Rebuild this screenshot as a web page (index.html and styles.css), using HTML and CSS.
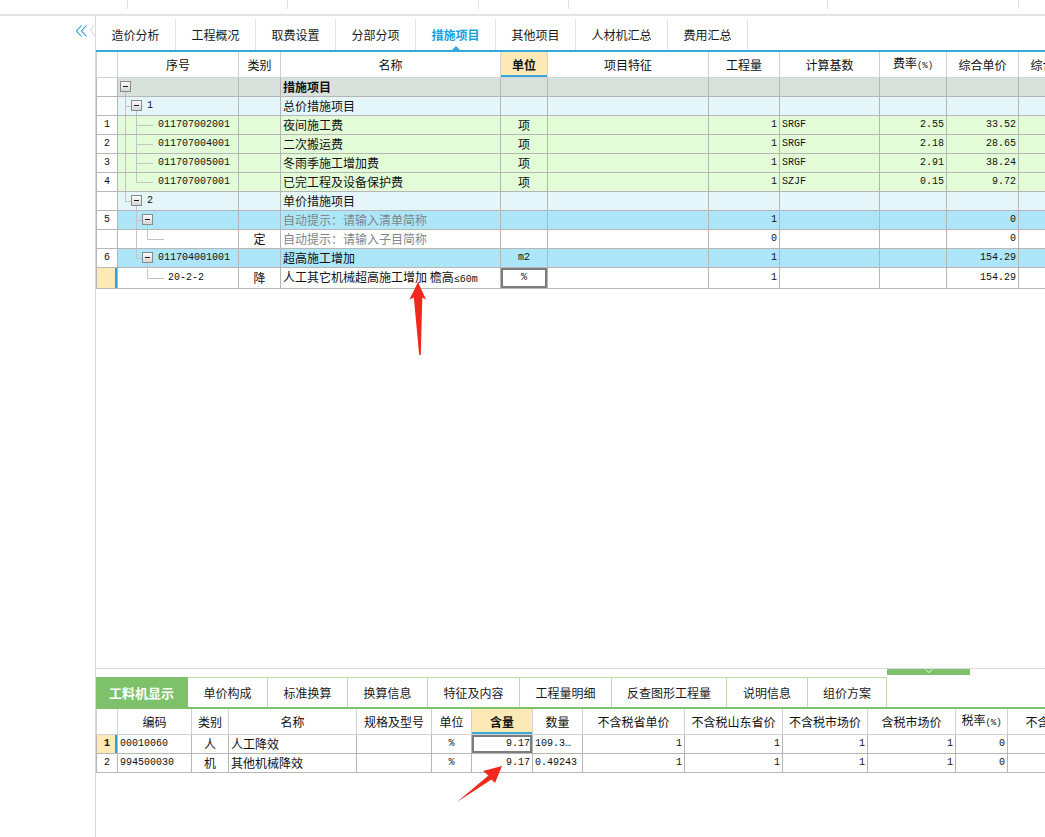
FILE: index.html
```html
<!DOCTYPE html>
<html lang="zh-CN">
<head>
<meta charset="utf-8">
<title>措施项目</title>
<link rel="stylesheet" href="styles.css">
</head>
<body>
<div class="topbar">
  <span class="seg s1"></span><span class="seg s2"></span><span class="seg s3"></span><span class="seg s4"></span><span class="seg s5"></span><span class="seg s6"></span>
</div>
<div class="main">
  <aside class="side">
    <svg class="collapse" width="20" height="14" viewBox="0 0 20 14">
      <polyline points="5.5,0.5 0.5,6 5.5,11.5" fill="none" stroke="#1e9ad6" stroke-width="1.1"/>
      <polyline points="10.5,0.5 5.5,6 10.5,11.5" fill="none" stroke="#1e9ad6" stroke-width="1.1"/>
      <polyline points="19.5,-2 14.5,5 19.5,12" fill="none" stroke="#d4d4d4" stroke-width="1"/>
    </svg>
  </aside>
  <section class="panel">
    <nav class="tabs">
      <div class="tab">造价分析</div>
      <div class="tab">工程概况</div>
      <div class="tab">取费设置</div>
      <div class="tab">分部分项</div>
      <div class="tab active">措施项目</div>
      <div class="tab">其他项目</div>
      <div class="tab wide">人材机汇总</div>
      <div class="tab">费用汇总</div>
    </nav>
    <div class="grid-area">
      <table class="grid top">
        <colgroup>
          <col class="c21"><col class="c121"><col class="c42"><col class="c220"><col class="c47"><col class="c161"><col class="c71"><col class="c100"><col class="c67"><col class="c72"><col class="c72">
        </colgroup>
        <thead>
          <tr>
            <th class="rn"></th><th>序号</th><th>类别</th><th>名称</th><th class="hl">单位</th><th>项目特征</th><th>工程量</th><th>计算基数</th><th>费率<span class="pct">(%)</span></th><th>综合单价</th><th>综合合价</th>
          </tr>
        </thead>
        <tbody>
          <tr class="r-root">
            <td class="rn"></td>
            <td class="tree"><div class="tv"><span class="g b"><i class="bx"></i></span></div></td>
            <td></td><td class="b">措施项目</td><td></td><td></td><td></td><td></td><td></td><td></td><td></td>
          </tr>
          <tr class="r-grp">
            <td class="rn"></td>
            <td class="tree"><div class="tv"><span class="g t"></span><span class="g b"><i class="bx"></i></span><span class="m lbl">1</span></div></td>
            <td></td><td>总价措施项目</td><td></td><td></td><td></td><td></td><td></td><td></td><td></td>
          </tr>
          <tr class="r-leaf">
            <td class="rn m">1</td>
            <td class="tree"><div class="tv"><span class="g v"></span><span class="g t"></span><span class="g h"></span><span class="m lbl">011707002001</span></div></td>
            <td></td><td>夜间施工费</td><td class="c">项</td><td></td><td class="m r">1</td><td class="m">SRGF</td><td class="m r">2.55</td><td class="m r">33.52</td><td></td>
          </tr>
          <tr class="r-leaf">
            <td class="rn m">2</td>
            <td class="tree"><div class="tv"><span class="g v"></span><span class="g t"></span><span class="g h"></span><span class="m lbl">011707004001</span></div></td>
            <td></td><td>二次搬运费</td><td class="c">项</td><td></td><td class="m r">1</td><td class="m">SRGF</td><td class="m r">2.18</td><td class="m r">28.65</td><td></td>
          </tr>
          <tr class="r-leaf">
            <td class="rn m">3</td>
            <td class="tree"><div class="tv"><span class="g v"></span><span class="g t"></span><span class="g h"></span><span class="m lbl">011707005001</span></div></td>
            <td></td><td>冬雨季施工增加费</td><td class="c">项</td><td></td><td class="m r">1</td><td class="m">SRGF</td><td class="m r">2.91</td><td class="m r">38.24</td><td></td>
          </tr>
          <tr class="r-leaf">
            <td class="rn m">4</td>
            <td class="tree"><div class="tv"><span class="g v"></span><span class="g e"></span><span class="g h"></span><span class="m lbl">011707007001</span></div></td>
            <td></td><td>已完工程及设备保护费</td><td class="c">项</td><td></td><td class="m r">1</td><td class="m">SZJF</td><td class="m r">0.15</td><td class="m r">9.72</td><td></td>
          </tr>
          <tr class="r-grp">
            <td class="rn"></td>
            <td class="tree"><div class="tv"><span class="g e"></span><span class="g b"><i class="bx"></i></span><span class="m lbl">2</span></div></td>
            <td></td><td>单价措施项目</td><td></td><td></td><td></td><td></td><td></td><td></td><td></td>
          </tr>
          <tr class="r-sel">
            <td class="rn m">5</td>
            <td class="tree"><div class="tv"><span class="g"></span><span class="g t"></span><span class="g b"><i class="bx"></i></span></div></td>
            <td></td><td class="hint">自动提示：请输入清单简称</td><td></td><td></td><td class="m r">1</td><td></td><td></td><td class="m r">0</td><td></td>
          </tr>
          <tr class="r-white">
            <td class="rn"></td>
            <td class="tree"><div class="tv"><span class="g"></span><span class="g v"></span><span class="g e"></span><span class="g h"></span></div></td>
            <td class="c">定</td><td class="hint">自动提示：请输入子目简称</td><td></td><td></td><td class="m r">0</td><td></td><td></td><td class="m r">0</td><td></td>
          </tr>
          <tr class="r-sel">
            <td class="rn m">6</td>
            <td class="tree"><div class="tv"><span class="g"></span><span class="g e"></span><span class="g b"><i class="bx"></i></span><span class="m lbl">011704001001</span></div></td>
            <td></td><td>超高施工增加</td><td class="m c">m2</td><td></td><td class="m r">1</td><td></td><td></td><td class="m r">154.29</td><td></td>
          </tr>
          <tr class="r-white cur">
            <td class="rn"></td>
            <td class="tree"><div class="tv"><span class="g"></span><span class="g"></span><span class="g e"></span><span class="g h"></span><span class="m lbl2">20-2-2</span></div></td>
            <td class="c">降</td><td>人工其它机械超高施工增加 檐高<span class="m">≤60m</span></td><td class="m c focus">%</td><td></td><td class="m r">1</td><td></td><td></td><td class="m r">154.29</td><td></td>
          </tr>
        </tbody>
      </table>
    </div>
    <div class="splitter">
      <span class="handle">
        <svg width="10" height="6" viewBox="0 0 10 6"><polyline points="1.5,0.5 5,3.5 8.5,0.5" fill="none" stroke="#e8f5e2" stroke-width="1"/></svg>
      </span>
    </div>
    <nav class="btabs">
      <div class="btab active w92">工料机显示</div>
      <div class="btab w80">单价构成</div>
      <div class="btab w80">标准换算</div>
      <div class="btab w80">换算信息</div>
      <div class="btab w92">特征及内容</div>
      <div class="btab w92">工程量明细</div>
      <div class="btab w115">反查图形工程量</div>
      <div class="btab w81">说明信息</div>
      <div class="btab w79">组价方案</div>
    </nav>
    <div class="bgrid-area">
      <table class="grid bottom">
        <colgroup>
          <col class="c21"><col class="c74"><col class="c37"><col class="c128"><col class="c75"><col class="c40"><col class="c61"><col class="c50"><col class="c102"><col class="c98"><col class="c85"><col class="c88"><col class="c52"><col class="c132">
        </colgroup>
        <thead>
          <tr>
            <th class="rn"></th><th>编码</th><th>类别</th><th>名称</th><th>规格及型号</th><th>单位</th><th class="hl">含量</th><th>数量</th><th>不含税省单价</th><th>不含税山东省价</th><th>不含税市场价</th><th>含税市场价</th><th>税率<span class="pct">(%)</span></th><th>不含税市场价合计</th>
          </tr>
        </thead>
        <tbody>
          <tr class="cur">
            <td class="rn m b">1</td><td class="m">00010060</td><td class="c">人</td><td>人工降效</td><td></td><td class="m c">%</td><td class="m r focus">9.17</td><td class="m">109.3…</td><td class="m r">1</td><td class="m r">1</td><td class="m r">1</td><td class="m r">1</td><td class="m r">0</td><td></td>
          </tr>
          <tr>
            <td class="rn m">2</td><td class="m">994500030</td><td class="c">机</td><td>其他机械降效</td><td></td><td class="m c">%</td><td class="m r">9.17</td><td class="m">0.49243</td><td class="m r">1</td><td class="m r">1</td><td class="m r">1</td><td class="m r">1</td><td class="m r">0</td><td></td>
          </tr>
        </tbody>
      </table>
    </div>
  </section>
</div>
<svg class="arrows" width="1045" height="837" viewBox="0 0 1045 837">
  <polygon points="418,282 426,299.5 422.3,297.5 420.8,355 419.2,355 413.8,297.5 409.5,299.5" fill="#f0281f"/>
  <polygon points="502,766 483,771 488.5,775.5 457,802 491.5,779.5 495,783" fill="#f0281f"/>
</svg>
</body>
</html>
```
FILE: styles.css
```css
* { box-sizing: border-box; }
html, body { margin: 0; padding: 0; }
body {
  width: 1045px;
  height: 837px;
  overflow: hidden;
  position: relative;
  background: #fff;
  color: #111;
  font-family: "Noto Sans CJK SC", "Noto Sans", sans-serif;
  font-size: 12px;
}

/* top strip */
.topbar {
  display: flex;
  height: 16px;
  border-bottom: 2px solid #e4e4e4;
}
.seg { flex: none; height: 9px; border-right: 1px solid #e2e2e2; }
.s1 { width: 128px; }
.s2 { width: 160px; }
.s3 { width: 191px; }
.s4 { width: 90px; }
.s5 { width: 259px; }
.s6 { width: 191px; }

.main { display: flex; height: 821px; }
.side { flex: none; width: 95px; padding: 9px 0 0 76px; }
.collapse { display: block; }

.panel {
  flex: 1;
  min-width: 0;
  display: flex;
  flex-direction: column;
  overflow: hidden;
  border-left: 1px solid #dadada;
}

/* upper tabs */
.tabs {
  flex: none;
  display: flex;
  height: 36px;
  padding-top: 3px;
  border-bottom: 2px solid #36a8dc;
}
.tab {
  flex: none;
  position: relative;
  width: 80px;
  height: 31px;
  line-height: 31px;
  text-align: center;
  border-right: 1px solid #e3e3e3;
  color: #1a1a1a;
}
.tab.wide { width: 92px; }
.tab.active { color: #1b9fe0; font-weight: bold; }
.tab.active::after {
  content: "";
  position: absolute;
  left: 50%;
  bottom: 0;
  margin-left: -4px;
  border-left: 4px solid transparent;
  border-right: 4px solid transparent;
  border-bottom: 4px solid #36a8dc;
}

/* grids */
.grid-area { flex: none; height: 616px; overflow: hidden; }
.grid {
  border-collapse: collapse;
  table-layout: fixed;
}
.grid.top { width: 994px; }
.grid.bottom { width: 1043px; }
.grid th, .grid td {
  padding: 0 2px;
  border: 1px solid #b6b6b6;
  white-space: nowrap;
  overflow: hidden;
  line-height: 17px;
  font-weight: normal;
  text-align: left;
}
.grid th {
  height: 25px;
  text-align: center;
  border-top: none;
  border-color: #d2d2d2;
  background: #fff;
  color: #111;
}
.grid tbody tr { height: 19px; }
.grid th.hl {
  background: #fde9b5;
  font-weight: bold;
  box-shadow: inset 0 -2px 0 #36a8dc;
}
.pct { font-family: "Liberation Mono", monospace; font-size: 9px; }

.c21 { width: 21px; } .c121 { width: 121px; } .c42 { width: 42px; } .c220 { width: 220px; }
.c47 { width: 47px; } .c161 { width: 161px; } .c71 { width: 71px; } .c100 { width: 100px; }
.c67 { width: 67px; } .c72 { width: 72px; } .c74 { width: 74px; } .c37 { width: 37px; }
.c128 { width: 128px; } .c75 { width: 75px; } .c40 { width: 40px; } .c61 { width: 61px; }
.c50 { width: 50px; } .c102 { width: 102px; } .c98 { width: 98px; } .c85 { width: 85px; }
.c88 { width: 88px; } .c52 { width: 52px; } .c132 { width: 132px; }

.m { font-family: "Liberation Mono", "DejaVu Sans Mono", monospace; font-size: 10px; }
.r { text-align: right !important; }
.c { text-align: center !important; }
.b { font-weight: bold !important; }
.hint { color: #7d878c; }
.rn { text-align: center !important; background: #fff; }

.r-root td { background: #d9e1dd; }
.r-grp td { background: #e5f6fb; }
.r-leaf td { background: #e2fcd8; }
.r-sel td { background: #ade6f8; }
.r-white td { background: #fff; }
.grid tr td.rn { background: #fff; }
.grid tr.cur td.rn { background: #fde9b5; box-shadow: inset -2px 0 0 #2ba0da; }
.grid td.focus { box-shadow: inset 0 0 0 2px #7c7c7c; }

/* tree column */
.grid td.tree { padding: 0 0 0 2px; }
.tv { display: flex; align-items: center; height: 18px; }
.g {
  flex: none;
  width: 11px;
  height: 18px;
  display: flex;
  align-items: center;
  justify-content: center;
}
.g.v { background: linear-gradient(#c4c4c4, #c4c4c4) no-repeat 5px 0 / 1px 100%; }
.g.t {
  background:
    linear-gradient(#c4c4c4, #c4c4c4) no-repeat 5px 0 / 1px 100%,
    linear-gradient(#c4c4c4, #c4c4c4) no-repeat 5px 9px / 6px 1px;
}
.g.e {
  background:
    linear-gradient(#c4c4c4, #c4c4c4) no-repeat 5px 0 / 1px 10px,
    linear-gradient(#c4c4c4, #c4c4c4) no-repeat 5px 9px / 6px 1px;
}
.g.h { background: linear-gradient(#c4c4c4, #c4c4c4) no-repeat 0 9px / 100% 1px; }
.g.b { background: linear-gradient(#c4c4c4, #c4c4c4) no-repeat 5px 10px / 1px 8px; }
.bx {
  display: block;
  width: 11px;
  height: 11px;
  border: 1px solid #8a8a8a;
  background:
    linear-gradient(#1a1a1a, #1a1a1a) no-repeat center / 5px 1px,
    linear-gradient(#fbfbfb, #d6d6d6);
}
.lbl { margin-left: 5px; }
.lbl2 { margin-left: 4px; }

/* splitter */
.splitter {
  flex: none;
  height: 9px;
  border-top: 1px solid #dcdcdc;
  display: flex;
}
.handle {
  margin-left: 791px;
  width: 83px;
  height: 6px;
  background: #7dc16a;
  display: flex;
  justify-content: center;
  align-items: flex-start;
}
.handle svg { display: block; }

/* bottom tabs */
.btabs {
  flex: none;
  display: flex;
  height: 32px;
  border-bottom: 2px solid #7dc16a;
}
.btab {
  flex: none;
  height: 30px;
  line-height: 29px;
  text-align: center;
  border-top: 1px solid #bcdcad;
  border-right: 1px solid #bcdcad;
  color: #1a1a1a;
}
.btab.active {
  background: #7dc16a;
  border-color: #7dc16a;
  color: #fff;
  font-weight: bold;
  font-size: 13px;
}
.w79 { width: 79px; } .w80 { width: 80px; } .w81 { width: 81px; }
.w92 { width: 92px; } .w115 { width: 115px; }

.bgrid-area { flex: 1; overflow: hidden; }

.arrows {
  position: absolute;
  left: 0;
  top: 0;
  pointer-events: none;
}
```
